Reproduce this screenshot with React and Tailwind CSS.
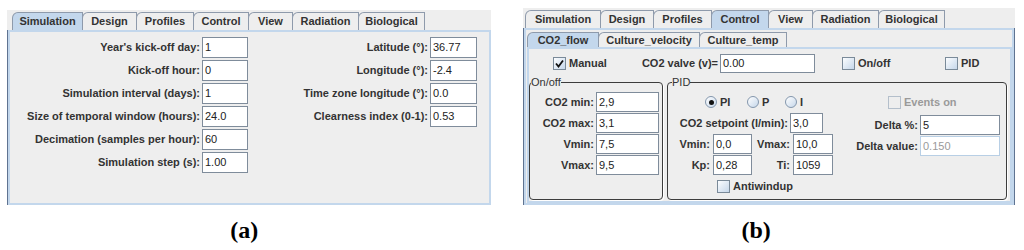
import clsx from 'clsx';

const leftTabs = [
  ['Simulation', 'w-[71px]'],
  ['Design', 'w-[55px]'],
  ['Profiles', 'w-[58px]'],
  ['Control', 'w-[56px]'],
  ['View', 'w-[45px]'],
  ['Radiation', 'w-[67px]'],
  ['Biological', 'w-[67px]'],
];

const rightTabs = [
  ['Simulation', 'w-[76px]'],
  ['Design', 'w-[54px]'],
  ['Profiles', 'w-[59px]'],
  ['Control', 'w-[58px]'],
  ['View', 'w-[45px]'],
  ['Radiation', 'w-[67px]'],
  ['Biological', 'w-[67px]'],
];

const subTabs = [
  ['CO2_flow', 'w-[72px]'],
  ['Culture_velocity', 'w-[102px]'],
  ['Culture_temp', 'w-[88px]'],
];

const simLeft = [
  ["Year's kick-off day:", '1'],
  ['Kick-off hour:', '0'],
  ['Simulation interval (days):', '1'],
  ['Size of temporal window (hours):', '24.0'],
  ['Decimation (samples per hour):', '60'],
  ['Simulation step (s):', '1.00'],
];

const simRight = [
  ['Latitude (°):', '36.77'],
  ['Longitude (°):', '-2.4'],
  ['Time zone longitude (°):', '0.0'],
  ['Clearness index (0-1):', '0.53'],
];

const onOff = [
  ['CO2 min:', '2,9'],
  ['CO2 max:', '3,1'],
  ['Vmin:', '7,5'],
  ['Vmax:', '9,5'],
];

const Tab = ({ label, w, active }) => (
  <div
    className={clsx(
      'h-full -mr-px flex items-center justify-center border border-b-0 border-[#8e9aab] rounded-tl-[6px] font-bold whitespace-nowrap text-[11px]',
      active ? 'bg-[#c3d7ec] relative z-10' : 'bg-[#eeeeee]',
      w
    )}
  >
    {label}
  </div>
);

const Field = ({ value, disabled, className }) => (
  <div
    className={clsx(
      'h-full bg-white border flex items-center pl-[2px] text-[11px] font-normal',
      disabled ? 'border-[#b8cfe5] text-[#9a9a9a]' : 'border-[#7f8c9b] text-[#222]',
      className
    )}
  >
    {value}
  </div>
);

const Check = ({ checked, disabled }) => (
  <div
    className={clsx(
      'w-[13px] h-[13px] border flex items-center justify-center shrink-0',
      disabled
        ? 'border-[#b4bfcb] bg-[#eeeeee]'
        : 'border-[#7a8a99] bg-gradient-to-br from-[#fbfdff] to-[#c6d7ea]'
    )}
  >
    {checked && (
      <svg width="9" height="9" viewBox="0 0 9 9">
        <path d="M1 4.5 L3.5 7.5 L8 1.5" fill="none" stroke="#111" strokeWidth="1.8" />
      </svg>
    )}
  </div>
);

const Radio = ({ on }) => (
  <div className="w-[12px] h-[12px] rounded-full border border-[#8497ad] bg-gradient-to-br from-[#ffffff] to-[#c6d7ea] flex items-center justify-center shrink-0">
    {on && <div className="w-[5px] h-[5px] rounded-full bg-[#111]" />}
  </div>
);

const LabelRow = ({ label, value, fieldW }) => (
  <div className="h-[21px] flex justify-end items-stretch">
    <div className="flex items-center whitespace-nowrap mr-[2px]">{label}</div>
    <Field value={value} className={fieldW} />
  </div>
);

const FigureA = () => (
  <div className="ml-[7px] mt-[10px] w-[484px] h-[195px] bg-[#eeeeee] flex flex-col">
    <div className="h-[20px] pt-[2px] pl-[5px] flex">
      {leftTabs.map(([t, w], i) => (
        <Tab key={t} label={t} w={w} active={i === 0} />
      ))}
    </div>
    <div className="flex-1 border-l border-[#5f7391]">
      <div className="h-full border-2 border-[#c3d7ec] flex pt-[5px]">
        <div className="w-[238px] flex flex-col gap-[2px]">
          {simLeft.map(([l, v]) => (
            <LabelRow key={l} label={l} value={v} fieldW="w-[46px]" />
          ))}
        </div>
        <div className="w-[229px] flex flex-col gap-[2px]">
          {simRight.map(([l, v]) => (
            <LabelRow key={l} label={l} value={v} fieldW="w-[47px]" />
          ))}
        </div>
      </div>
    </div>
  </div>
);

const FigureB = () => (
  <div className="ml-[32px] mt-[8px] w-[492px] h-[197px] bg-[#eeeeee] flex flex-col">
    <div className="h-[20px] pt-[2px] pl-[2px] flex">
      {rightTabs.map(([t, w], i) => (
        <Tab key={t} label={t} w={w} active={i === 3} />
      ))}
    </div>
    <div className="flex-1 border-l border-r border-[#5f7391]">
      <div className="h-full border-2 border-[#c3d7ec] pt-[2px] pl-px flex flex-col">
        <div className="h-[15px] flex">
          {subTabs.map(([t, w], i) => (
            <Tab key={t} label={t} w={w} active={i === 0} />
          ))}
        </div>
        <div className="w-[485px] h-[156px] border-2 border-[#c3d7ec] flex flex-col">
          {/* top row */}
          <div className="mt-[5px] h-[19px] flex items-stretch pl-[24px]">
            <div className="w-[95px] flex items-center gap-[2px]">
              <Check checked />
              <span className="ml-[1px]">Manual</span>
            </div>
            <div className="w-[70px] flex items-center justify-end whitespace-nowrap">CO2 valve (v)=</div>
            <Field value="0.00" className="ml-[2px] w-[95px]" />
            <div className="ml-[27px] w-[103px] flex items-center gap-[3px]">
              <Check />
              <span>On/off</span>
            </div>
            <div className="flex items-center gap-[3px]">
              <Check />
              <span>PID</span>
            </div>
          </div>

          {/* groups */}
          <div className="mt-[2px] flex gap-[4px]">
            <fieldset className="w-[134px] h-[125px] border border-[#3c3c3c] rounded-[4px] shadow-[1px_1px_0_#ffffff]">
              <legend className="ml-[1px] leading-[14px] font-normal">On/off</legend>
              <div className="pt-[3px] flex flex-col gap-[1px]">
                {onOff.map(([l, v]) => (
                  <div key={l} className="h-[20px] flex items-stretch">
                    <div className="w-[64px] flex items-center justify-end whitespace-nowrap">{l}</div>
                    <Field value={v} className="ml-[2px] w-[63px]" />
                  </div>
                ))}
              </div>
            </fieldset>

            <fieldset className="w-[340px] h-[125px] border border-[#3c3c3c] rounded-[4px] shadow-[1px_1px_0_#ffffff]">
              <legend className="ml-[4px] leading-[14px] font-normal">PID</legend>
              <div className="flex pl-[14px]">
                <div className="w-[168px] flex flex-col">
                  <div className="mt-[6px] h-[14px] flex items-center pl-[23px]">
                    <div className="w-[42px] flex items-center gap-[3px]">
                      <Radio on />
                      <span>PI</span>
                    </div>
                    <div className="w-[38px] flex items-center gap-[3px]">
                      <Radio />
                      <span>P</span>
                    </div>
                    <div className="flex items-center gap-[3px]">
                      <Radio />
                      <span>I</span>
                    </div>
                  </div>
                  <div className="mt-[4px] h-[20px] flex items-stretch">
                    <div className="w-[106px] flex items-center justify-end whitespace-nowrap">CO2 setpoint (l/min):</div>
                    <Field value="3,0" className="ml-[2px] w-[33px]" />
                  </div>
                  <div className="mt-[1px] h-[20px] flex items-stretch">
                    <div className="w-[28px] flex items-center justify-end">Vmin:</div>
                    <Field value="0,0" className="ml-[3px] w-[39px]" />
                    <div className="w-[38px] flex items-center justify-end">Vmax:</div>
                    <Field value="10,0" className="ml-[3px] w-[40px]" />
                  </div>
                  <div className="mt-[1px] h-[20px] flex items-stretch">
                    <div className="w-[28px] flex items-center justify-end">Kp:</div>
                    <Field value="0,28" className="ml-[3px] w-[39px]" />
                    <div className="w-[38px] flex items-center justify-end">Ti:</div>
                    <Field value="1059" className="ml-[3px] w-[40px]" />
                  </div>
                  <div className="mt-[4px] h-[14px] flex items-center gap-[3px] pl-[35px]">
                    <Check />
                    <span>Antiwindup</span>
                  </div>
                </div>
                <div className="flex flex-col">
                  <div className="mt-[6px] h-[14px] flex items-center gap-[3px] pl-[38px] text-[#9a9a9a]">
                    <Check disabled />
                    <span>Events on</span>
                  </div>
                  <div className="mt-[6px] h-[20px] flex items-stretch">
                    <div className="w-[68px] flex items-center justify-end whitespace-nowrap">Delta %:</div>
                    <Field value="5" className="ml-[2px] w-[80px]" />
                  </div>
                  <div className="mt-[1px] h-[20px] flex items-stretch">
                    <div className="w-[68px] flex items-center justify-end whitespace-nowrap">Delta value:</div>
                    <Field value="0.150" disabled className="ml-[2px] w-[80px]" />
                  </div>
                </div>
              </div>
            </fieldset>
          </div>
        </div>
      </div>
    </div>
  </div>
);

export default function App() {
  return (
    <div className="w-[1024px] h-[250px] bg-white overflow-hidden font-['Liberation_Sans',Arial,sans-serif] text-[11px] font-bold text-[#333]">
      <div className="flex items-start">
        <FigureA />
        <FigureB />
      </div>
      <div className="flex mt-[11px] [font-family:'Liberation_Serif',serif] text-[24px] leading-[28px] text-black">
        <div className="w-[496px] text-center">(a)</div>
        <div className="w-[544px] text-center">(b)</div>
      </div>
    </div>
  );
}
